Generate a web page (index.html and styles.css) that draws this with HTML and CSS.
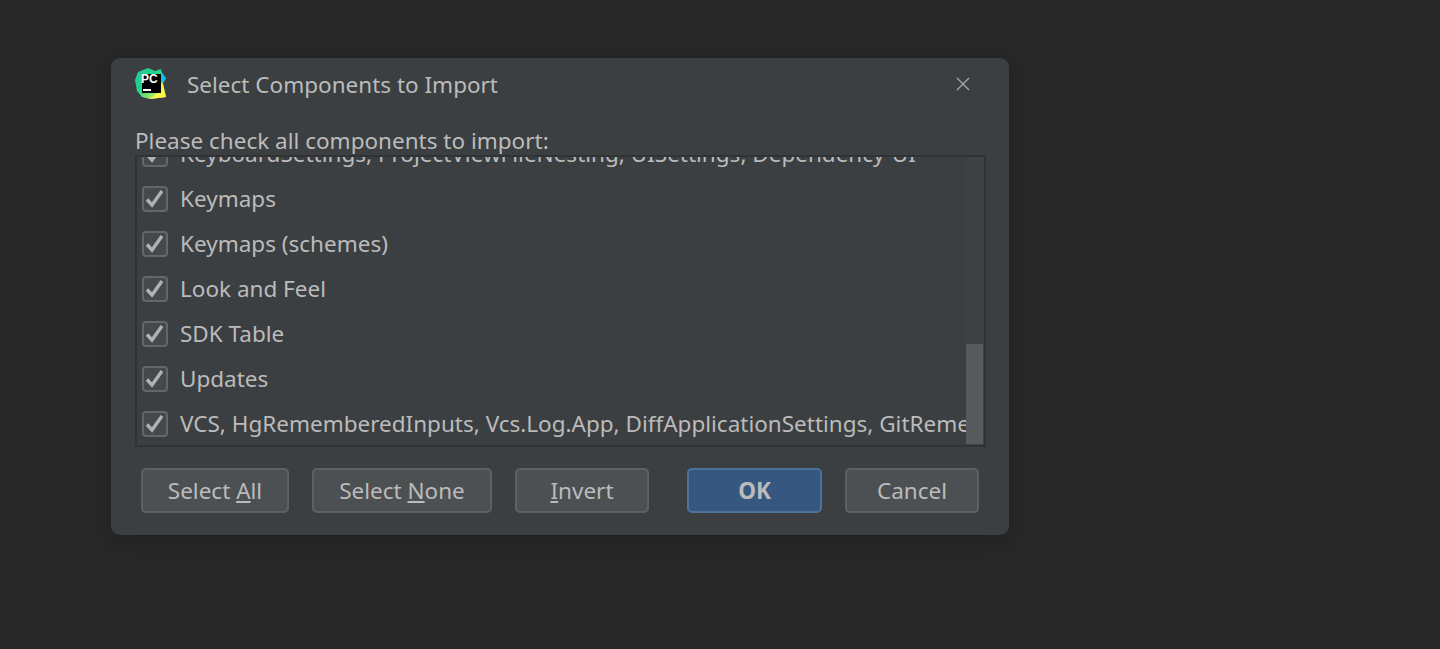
FILE: index.html
```html
<!DOCTYPE html>
<html lang="en">
<head>
<meta charset="utf-8">
<title>Select Components to Import</title>
<link rel="stylesheet" href="styles.css">
</head>
<body>
<div class="dialog">
  <header class="titlebar">
    <svg class="logo" viewBox="0 0 32 32" aria-hidden="true">
      <defs>
        <linearGradient id="lg" x1="0" y1="0" x2="1" y2="1">
          <stop offset="0" stop-color="#1fc8a0"/>
          <stop offset="0.45" stop-color="#21d789"/>
          <stop offset="0.8" stop-color="#c8ee5a"/>
          <stop offset="1" stop-color="#fcf84a"/>
        </linearGradient>
      </defs>
      <polygon points="0,12 3,4 13,0 20,3 26,1 27,8 31,10 28,15 31,29 15,31 7,29 2,23" fill="url(#lg)"/>
      <polygon points="26,3 31,10 28,15 25,12" fill="#07c3f2"/>
      <polygon points="27,15 31,29 15,31 24,24" fill="#fcf84a"/>
      <rect x="7" y="6" width="19" height="19" fill="#000"/>
      <rect x="8" y="21" width="8" height="2" fill="#fff"/>
    </svg>
    <span class="logo-text">PC</span>
    <h1 class="title">Select Components to Import</h1>
    <svg class="close" viewBox="0 0 14 14" aria-hidden="true"><path d="M1 1 13 13M13 1 1 13" stroke="#a6a8aa" stroke-width="1.3" fill="none"/></svg>
  </header>
  <p class="prompt">Please check all components to import:</p>
  <div class="list">
    <div class="rows">
      <label class="row"><span class="box"><svg viewBox="0 0 22 22"><path d="M3 11.5 8 17 18 3" /></svg></span><span class="cut">KeyboardSettings, ProjectViewFileNesting, UISettings, Dependency-UI</span></label>
      <label class="row"><span class="box"><svg viewBox="0 0 22 22"><path d="M3 11.5 8 17 18 3" /></svg></span>Keymaps</label>
      <label class="row"><span class="box"><svg viewBox="0 0 22 22"><path d="M3 11.5 8 17 18 3" /></svg></span>Keymaps (schemes)</label>
      <label class="row"><span class="box"><svg viewBox="0 0 22 22"><path d="M3 11.5 8 17 18 3" /></svg></span>Look and Feel</label>
      <label class="row"><span class="box"><svg viewBox="0 0 22 22"><path d="M3 11.5 8 17 18 3" /></svg></span>SDK Table</label>
      <label class="row"><span class="box"><svg viewBox="0 0 22 22"><path d="M3 11.5 8 17 18 3" /></svg></span>Updates</label>
      <label class="row"><span class="box"><svg viewBox="0 0 22 22"><path d="M3 11.5 8 17 18 3" /></svg></span>VCS, HgRememberedInputs, Vcs.Log.App, DiffApplicationSettings, GitRememberedInputs</label>
    </div>
    <div class="track"><div class="thumb"></div></div>
  </div>
  <footer class="buttons">
    <button class="btn w-all">Select <u>A</u>ll</button>
    <button class="btn w-none">Select <u>N</u>one</button>
    <button class="btn w-inv"><u>I</u>nvert</button>
    <button class="btn primary w-ok">OK</button>
    <button class="btn w-inv">Cancel</button>
  </footer>
</div>
</body>
</html>
```
FILE: styles.css
```css
* { box-sizing: border-box; }
html, body { margin: 0; height: 649px; overflow: hidden; }
body {
  background: #282828;
  color: #bbbbbb;
  font-family: "Noto Sans", "Open Sans", sans-serif;
  font-size: 22.5px;
  padding: 58px 0 0 111px;
}
.dialog {
  width: 898px;
  height: 477px;
  background: #3c3f41;
  border-radius: 9px;
  box-shadow: 0 4px 24px rgba(0, 0, 0, 0.22);
  padding: 0 24px;
}
.titlebar {
  height: 54px;
  display: flex;
  align-items: center;
  position: relative;
}
.logo { width: 32px; height: 32px; flex: none; margin-top: -2px; }
.logo-text {
  position: absolute;
  left: 6px;
  top: 14px;
  font: 700 12px/14px "Liberation Sans", sans-serif;
  color: #fff;
}
.title {
  margin: -2px 0 0 20px;
  font-size: 22.5px;
  font-weight: 400;
  color: #bbbbbb;
  flex: 1;
}
.close { width: 14px; height: 14px; margin: -2px 15px 0 0; }
.prompt {
  margin: 15px 0 0;
  height: 28px;
  line-height: 28px;
  white-space: nowrap;
}
.list {
  width: 851px;
  height: 292px;
  border: 2px solid #303234;
  position: relative;
  overflow: hidden;
  display: flex;
  flex-direction: column;
  justify-content: flex-end;
}
.rows { flex: none; margin-bottom: -1px; }
.row {
  height: 45px;
  display: flex;
  align-items: center;
  padding-left: 5px;
  white-space: nowrap;
  overflow: hidden;
}
.box {
  width: 26px;
  height: 26px;
  flex: none;
  margin-right: 12px;
  border: 2px solid #646769;
  border-radius: 4px;
  background: #46494b;
}
.box svg { display: block; width: 22px; height: 22px; }
.box path { fill: none; stroke: #afb1b3; stroke-width: 3.4; }
.track {
  position: absolute;
  right: 0;
  top: 0;
  bottom: 0;
  width: 18px;
  padding-right: 1px;
  background: #3e4143;
  display: flex;
  flex-direction: column;
  justify-content: flex-end;
}
.thumb { height: 100px; background: #565a5c; margin-bottom: 1px; }
.buttons {
  display: flex;
  gap: 23px;
  margin-top: 21px;
  padding: 0 6px;
}
.btn {
  height: 45px;
  padding: 0;
  flex: none;
  font: inherit;
  color: #bbbbbb;
  background: #4c5052;
  border: 2px solid #5e6163;
  border-radius: 5px;
}
.primary {
  background: #365880;
  border-color: #4c7299;
  font-weight: 700;
}
.w-all { width: 148px; }
.w-none { width: 180px; }
.w-inv { width: 134px; }
.w-ok { width: 135px; margin-left: 15px; }
```
